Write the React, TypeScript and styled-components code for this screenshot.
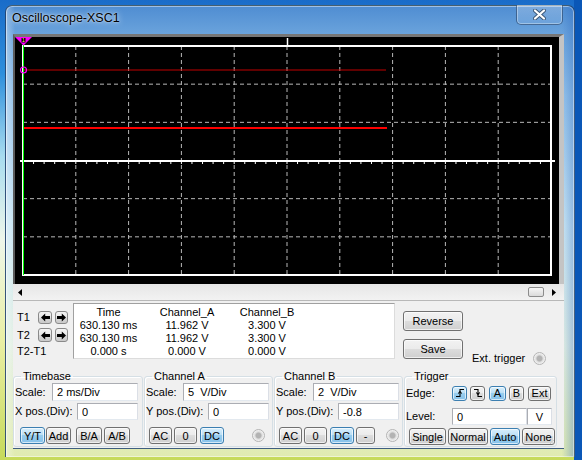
import React from 'react';
import styled, { createGlobalStyle } from 'styled-components';

const GlobalStyle = createGlobalStyle`
  html, body { margin: 0; padding: 0; }
  body {
    width: 582px;
    height: 460px;
    overflow: hidden;
    font-family: "Liberation Sans", Arial, sans-serif;
    font-size: 11px;
    color: #000;
    background:
      linear-gradient(90deg, transparent 0 574px, #0a57b7 574px),
      linear-gradient(180deg, #1a6cc9 0%, #2e8fdc 16%, #a8dcef 34%, #eef6ea 52%, #eaf0a4 74%, #c6da5a 100%);
  }
`;

const Window = styled.div`
  box-sizing: border-box;
  margin: 5px 0 0 5px;
  width: 570px;
  height: 452px;
  padding: 0 10px 8px 7px;
  display: flex;
  flex-direction: column;
  border: 1px solid rgba(20, 50, 90, 0.75);
  border-bottom: none;
  border-radius: 7px 7px 0 0;
  background:
    linear-gradient(90deg, rgba(255, 255, 255, 0.35) 0, rgba(255, 255, 255, 0) 9px, rgba(255, 255, 255, 0) 556px, rgba(40, 100, 190, 0.35) 568px),
    linear-gradient(180deg, #4f8dd2 0px, #6aa3dc 28px, #93c2ea 90px, #c9e6f4 220px, #e3f0e4 340px, #e0ebb0 452px);
  box-shadow: inset 0 0 0 1px rgba(255, 255, 255, 0.45);
`;

const TitleBar = styled.div`
  height: 28px;
  flex-shrink: 0;
  display: flex;
  align-items: flex-start;
`;

const Title = styled.div`
  margin: 4px 0 0 -1px;
  font-size: 12.5px;
  line-height: 16px;
  color: #000;
  text-shadow: 0 0 6px rgba(255, 255, 255, 0.9), 0 0 2px rgba(255, 255, 255, 0.7);
`;

const CloseButton = styled.div`
  box-sizing: border-box;
  margin: -1px 1px 0 auto;
  width: 47px;
  height: 20px;
  display: flex;
  align-items: center;
  justify-content: center;
  border: 1px solid rgba(25, 55, 95, 0.6);
  border-top: none;
  border-radius: 0 0 5px 5px;
  background: linear-gradient(180deg, rgba(255, 255, 255, 0.28), rgba(255, 255, 255, 0.08));
  box-shadow: inset 0 0 0 1px rgba(255, 255, 255, 0.35);
`;

const Client = styled.div`
  box-sizing: border-box;
  width: 551px;
  height: 415px;
  flex-shrink: 0;
  display: flex;
  flex-direction: column;
  background: #f0f0f0;
  border-bottom: 1px solid #3f5e80;
`;

const Screen = styled.div`
  box-sizing: border-box;
  height: 250px;
  flex-shrink: 0;
  background: #000;
  border-top: 3px solid #767676;
  border-left: 2px solid #5c5c5c;
  border-right: 5px solid #c4c4c4;
  line-height: 0;
`;

const ScrollBar = styled.div`
  box-sizing: border-box;
  height: 17px;
  flex-shrink: 0;
  display: flex;
  align-items: center;
  padding: 0 8px 0 5px;
  background: linear-gradient(180deg, #e6e6e6, #f2f2f2);
  border-bottom: 1px solid #b8b8b8;
`;

const Thumb = styled.div`
  box-sizing: border-box;
  width: 16px;
  height: 10px;
  margin-left: auto;
  border: 1px solid #8c8c8c;
  border-radius: 2px;
  background: linear-gradient(180deg, #f6f6f6, #dadada);
`;

const TopPanel = styled.div`
  height: 62px;
  flex-shrink: 0;
  display: flex;
`;

const CursorCol = styled.div`
  width: 60px;
  padding-top: 10px;
  display: flex;
  flex-direction: column;
`;

const CursorRow = styled.div<{ $h: number; $mt?: number }>`
  height: ${p => p.$h}px;
  margin-top: ${p => p.$mt ?? 0}px;
  display: flex;
  align-items: center;
`;

const CursorLabel = styled.div`
  width: 21px;
  padding-left: 4px;
  line-height: 13px;
  white-space: nowrap;
`;

const ArrowBtn = styled.div<{ $w: number; $ml?: number }>`
  box-sizing: border-box;
  width: ${p => p.$w}px;
  height: 100%;
  margin-left: ${p => p.$ml ?? 0}px;
  display: flex;
  align-items: center;
  justify-content: center;
  border: 1px solid #8a8a8a;
  border-radius: 3px;
  background: linear-gradient(180deg, #f4f4f4, #e6e6e6 50%, #d6d6d6 50%, #cacaca);
`;

const Readout = styled.div`
  box-sizing: border-box;
  width: 322px;
  height: 56px;
  margin-top: 2px;
  padding-top: 2px;
  display: grid;
  grid-template-columns: 69px 88px 72px;
  grid-auto-rows: 13px;
  line-height: 13px;
  text-align: center;
  background: #fff;
  border: 1px solid #a0a0a0;
  border-right-color: #dcdcdc;
  border-bottom-color: #dcdcdc;
  white-space: pre;
`;

const RightCol = styled.div`
  margin-left: 8px;
  padding-top: 10px;
  display: flex;
  flex-direction: column;
`;

const SaveRow = styled.div`
  margin-top: 8px;
  display: flex;
  align-items: flex-start;
`;

const ExtTrigger = styled.div`
  margin: 13px 0 0 9px;
  display: flex;
  align-items: center;
  gap: 8px;
  line-height: 13px;
  white-space: nowrap;
`;

const Btn = styled.button<{ $w: number; $ml?: number; $h?: number; $active?: boolean }>`
  box-sizing: border-box;
  width: ${p => p.$w}px;
  height: ${p => (p.$h ? `${p.$h}px` : '100%')};
  flex-shrink: 0;
  margin: 0 0 0 ${p => p.$ml ?? 0}px;
  padding: 0;
  display: flex;
  align-items: center;
  justify-content: center;
  font: 11px "Liberation Sans", Arial, sans-serif;
  color: #000;
  border: 1px solid ${p => (p.$active ? '#3c7fb1' : '#707070')};
  border-radius: 3px;
  background: ${p =>
    p.$active
      ? 'linear-gradient(180deg, #d8effc, #b9def5 50%, #98cdee 50%, #86c2ea)'
      : 'linear-gradient(180deg, #f2f2f2, #ebebeb 48%, #dddddd 50%, #cfcfcf)'};
  box-shadow: inset 0 0 0 1px rgba(255, 255, 255, 0.65);
`;

const BottomRow = styled.div`
  margin-top: 7px;
  display: flex;
  gap: 1px;
`;

const Group = styled.fieldset<{ $w: number }>`
  box-sizing: border-box;
  width: ${p => p.$w}px;
  height: 77px;
  min-width: 0;
  margin: 0;
  padding: 0 0 0 1px;
  border: 1px solid #d5dfe5;
  border-radius: 3px;
  box-shadow: inset 1px 1px 0 #fff;
  display: flex;
  flex-direction: column;
`;

const Legend = styled.legend`
  margin-left: 6px;
  padding: 0 2px;
  line-height: 13px;
  font-size: 11px;
`;

const Row = styled.div<{ $h: number; $mt?: number }>`
  height: ${p => p.$h}px;
  margin-top: ${p => p.$mt ?? 0}px;
  display: flex;
  align-items: center;
`;

const Label = styled.div<{ $w: number }>`
  width: ${p => p.$w}px;
  flex-shrink: 0;
  white-space: nowrap;
  line-height: 13px;
`;

const TextBox = styled.input<{ $w: number; $center?: boolean }>`
  box-sizing: border-box;
  width: ${p => p.$w}px;
  height: 100%;
  margin: 0;
  padding: 0 0 0 ${p => (p.$center ? 0 : 4)}px;
  text-align: ${p => (p.$center ? 'center' : 'left')};
  font: 11px "Liberation Sans", Arial, sans-serif;
  color: #000;
  background: #fff;
  border: 1px solid #abadb3;
  border-bottom-color: #e3e9ef;
  border-right-color: #dbdfe6;
  border-radius: 0;
  outline: none;
`;

const Radio = styled.div<{ $ml?: number }>`
  box-sizing: border-box;
  width: 13px;
  height: 13px;
  flex-shrink: 0;
  margin-left: ${p => p.$ml ?? 0}px;
  border: 1px solid #b4b4b4;
  border-radius: 50%;
  background: radial-gradient(circle, #b3b3b3 0 2.5px, #dcdcdc 3.5px, #f4f4f4 5.5px);
`;

const Grip = styled.div`
  position: absolute;
  right: 1px;
  bottom: 1px;
  width: 6px;
  height: 6px;
  background: radial-gradient(circle, #a8a8a8 0.8px, transparent 1px) 0 0 / 3px 3px;
  clip-path: polygon(100% 0, 100% 100%, 0 100%);
`;

const ArrowIcon: React.FC<{ dir: 'left' | 'right' }> = ({ dir }) => (
  <svg width="9" height="9" viewBox="0 0 9 9">
    <polygon
      points="0,4.5 4.2,0.5 4.2,3 9,3 9,6 4.2,6 4.2,8.5"
      fill="#000"
      transform={dir === 'right' ? 'translate(9 0) scale(-1 1)' : undefined}
    />
  </svg>
);

const EdgeIcon: React.FC<{ rising: boolean }> = ({ rising }) => (
  <svg width="10" height="10" viewBox="0 0 10 10">
    {rising ? (
      <>
        <path d="M1 8.5 H5 V1.5 H9" stroke="#000" strokeWidth="1.1" fill="none" />
        <path d="M3.3 5.5 L5 3.6 L6.7 5.5" stroke="#000" strokeWidth="1.1" fill="none" />
      </>
    ) : (
      <>
        <path d="M1 1.5 H5 V8.5 H9" stroke="#000" strokeWidth="1.1" fill="none" />
        <path d="M3.3 4.5 L5 6.4 L6.7 4.5" stroke="#000" strokeWidth="1.1" fill="none" />
      </>
    )}
  </svg>
);

const CloseGlyph = () => (
  <svg width="13" height="11" viewBox="0 0 13 11">
    <path d="M2 1.5 L11 9.5 M11 1.5 L2 9.5" stroke="#3b5675" strokeWidth="4" strokeLinecap="round" />
    <path d="M2 1.5 L11 9.5 M11 1.5 L2 9.5" stroke="#fff" strokeWidth="2.2" strokeLinecap="round" />
  </svg>
);

const PX0 = 23;
const PX1 = 551;
const PY0 = 46;
const PY1 = 275;
const colStep = (PX1 - PX0) / 10;
const rowStep = (PY1 - PY0) / 6;

const ScopeDisplay = () => {
  const cols = Array.from({ length: 9 }, (_, i) => PX0 + colStep * (i + 1));
  const rows = [1, 2, 4, 5].map(k => PY0 + rowStep * k);
  const ticks = Array.from({ length: 51 }, (_, i) => PX0 + (colStep / 5) * i);
  return (
    <svg width="544" height="247" viewBox="0 0 544 247">
      <g transform="translate(-15 -37)">
        {cols.map(x => (
          <line key={`c${x}`} x1={x} y1={PY0} x2={x} y2={PY1} stroke="#b8b8b8" strokeDasharray="4 3" />
        ))}
        {rows.map(y => (
          <line key={`r${y}`} x1={PX0} y1={y} x2={PX1} y2={y} stroke="#b8b8b8" strokeDasharray="4 3" />
        ))}
        <rect x={PX0} y={PY0} width={PX1 - PX0} height={PY1 - PY0} fill="none" stroke="#fff" strokeWidth="2" />
        <line x1="287.5" y1="38" x2="287.5" y2="46" stroke="#fff" strokeWidth="1.5" />
        <line x1="20" y1="161" x2="555" y2="161" stroke="#fff" strokeWidth="2" />
        {ticks.map(x => (
          <line key={`t${x}`} x1={x} y1="161" x2={x} y2="164" stroke="#fff" strokeWidth="1" />
        ))}
        <line x1={PX0} y1="70" x2="386" y2="70" stroke="#c00000" strokeWidth="1" />
        <line x1={PX0} y1="128" x2="387" y2="128" stroke="#ff0000" strokeWidth="2" />
        <line x1="23.5" y1="44" x2="23.5" y2={PY1} stroke="#00ff00" strokeWidth="1" />
        <circle cx="23.5" cy="70" r="3" fill="none" stroke="#ff00ff" strokeWidth="1.2" />
        <polygon points="15,37 32,37 23.5,45.5" fill="#ff00ff" />
        <rect x="21.5" y="38" width="4" height="4.5" fill="#000" />
        <text x="23.5" y="42.2" fontSize="5" textAnchor="middle" fill="#ffff60" fontFamily="Liberation Sans, Arial, sans-serif">1</text>
      </g>
    </svg>
  );
};

const TriangleArrow: React.FC<{ dir: 'left' | 'right'; ml?: number }> = ({ dir }) => (
  <svg width="4" height="7" viewBox="0 0 4 7">
    <polygon points={dir === 'left' ? '4,0 0,3.5 4,7' : '0,0 4,3.5 0,7'} fill="#000" />
  </svg>
);

const RightArrowWrap = styled.div`
  margin-left: 8px;
  line-height: 0;
`;

const TriggerGroup = styled(Group)`
  position: relative;
`;

export default function App() {
  return (
    <>
      <GlobalStyle />
      <Window>
        <TitleBar>
          <Title>Oscilloscope-XSC1</Title>
          <CloseButton>
            <CloseGlyph />
          </CloseButton>
        </TitleBar>

        <Client>
          <Screen>
            <ScopeDisplay />
          </Screen>

          <ScrollBar>
            <TriangleArrow dir="left" />
            <Thumb />
            <RightArrowWrap>
              <TriangleArrow dir="right" />
            </RightArrowWrap>
          </ScrollBar>

          <TopPanel>
            <CursorCol>
              <CursorRow $h={13}>
                <CursorLabel>T1</CursorLabel>
                <ArrowBtn $w={14}><ArrowIcon dir="left" /></ArrowBtn>
                <ArrowBtn $w={13} $ml={3}><ArrowIcon dir="right" /></ArrowBtn>
              </CursorRow>
              <CursorRow $h={14} $mt={4}>
                <CursorLabel>T2</CursorLabel>
                <ArrowBtn $w={14}><ArrowIcon dir="left" /></ArrowBtn>
                <ArrowBtn $w={13} $ml={3}><ArrowIcon dir="right" /></ArrowBtn>
              </CursorRow>
              <CursorRow $h={12} $mt={3}>
                <CursorLabel>T2-T1</CursorLabel>
              </CursorRow>
            </CursorCol>

            <Readout>
              <div>Time</div>
              <div>Channel_A</div>
              <div>Channel_B</div>
              <div>630.130 ms</div>
              <div>11.962 V</div>
              <div>3.300 V</div>
              <div>630.130 ms</div>
              <div>11.962 V</div>
              <div>3.300 V</div>
              <div>0.000 s</div>
              <div>0.000 V</div>
              <div>0.000 V</div>
            </Readout>

            <RightCol>
              <Btn $w={60} $h={20}>Reverse</Btn>
              <SaveRow>
                <Btn $w={60} $h={20}>Save</Btn>
                <ExtTrigger>
                  Ext. trigger
                  <Radio />
                </ExtTrigger>
              </SaveRow>
            </RightCol>
          </TopPanel>

          <BottomRow>
            <Group $w={130}>
              <Legend>Timebase</Legend>
              <Row $h={18}>
                <Label $w={37}>Scale:</Label>
                <TextBox $w={86} readOnly value="2 ms/Div" />
              </Row>
              <Row $h={17} $mt={2}>
                <Label $w={62}>X pos.(Div):</Label>
                <TextBox $w={61} readOnly value="0" />
              </Row>
              <Row $h={17} $mt={7}>
                <Btn $w={25} $ml={5} $active>Y/T</Btn>
                <Btn $w={25} $ml={1}>Add</Btn>
                <Btn $w={26} $ml={5}>B/A</Btn>
                <Btn $w={26} $ml={2}>A/B</Btn>
              </Row>
            </Group>

            <Group $w={129}>
              <Legend>Channel A</Legend>
              <Row $h={18}>
                <Label $w={37}>Scale:</Label>
                <TextBox $w={86} readOnly value="5  V/Div" />
              </Row>
              <Row $h={17} $mt={2}>
                <Label $w={62}>Y pos.(Div):</Label>
                <TextBox $w={61} readOnly value="0" />
              </Row>
              <Row $h={17} $mt={7}>
                <Btn $w={23} $ml={3}>AC</Btn>
                <Btn $w={23} $ml={2}>0</Btn>
                <Btn $w={24} $ml={3} $active>DC</Btn>
                <Radio $ml={28} />
              </Row>
            </Group>

            <Group $w={129}>
              <Legend>Channel B</Legend>
              <Row $h={18}>
                <Label $w={37}>Scale:</Label>
                <TextBox $w={86} readOnly value="2  V/Div" />
              </Row>
              <Row $h={17} $mt={2}>
                <Label $w={62}>Y pos.(Div):</Label>
                <TextBox $w={61} readOnly value="-0.8" />
              </Row>
              <Row $h={17} $mt={7}>
                <Btn $w={23} $ml={3}>AC</Btn>
                <Btn $w={23} $ml={2}>0</Btn>
                <Btn $w={24} $ml={3} $active>DC</Btn>
                <Btn $w={19} $ml={2}>-</Btn>
                <Radio $ml={11} />
              </Row>
            </Group>

            <TriggerGroup $w={153}>
              <Legend>Trigger</Legend>
              <Row $h={20}>
                <Label $w={46}>Edge:</Label>
                <Btn $w={15} $h={15} $active><EdgeIcon rising /></Btn>
                <Btn $w={15} $h={15} $ml={3}><EdgeIcon rising={false} /></Btn>
                <Btn $w={17} $h={15} $ml={4} $active>A</Btn>
                <Btn $w={15} $h={15} $ml={3}>B</Btn>
                <Btn $w={23} $h={15} $ml={4}>Ext</Btn>
              </Row>
              <Row $h={17} $mt={5}>
                <Label $w={46}>Level:</Label>
                <TextBox $w={75} readOnly value="0" />
                <TextBox $w={25} $center readOnly value="V" />
              </Row>
              <Row $h={17} $mt={3}>
                <Btn $w={37} $ml={3}>Single</Btn>
                <Btn $w={40} $ml={2}>Normal</Btn>
                <Btn $w={30} $ml={2} $active>Auto</Btn>
                <Btn $w={33} $ml={2}>None</Btn>
              </Row>
              <Grip />
            </TriggerGroup>
          </BottomRow>
        </Client>
      </Window>
    </>
  );
}
